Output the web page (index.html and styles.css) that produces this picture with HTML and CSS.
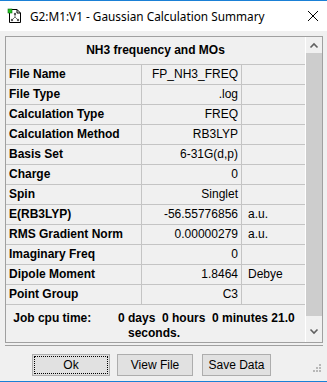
FILE: index.html
```html
<!DOCTYPE html>
<html lang="en">

<head>
    <meta charset="UTF-8" />
    <title>G2:M1:V1 - Gaussian Calculation Summary</title>
    <link rel="stylesheet" href="styles.css">
</head>

<body>
    <div class="window">
        <div class="titlebar">
            <svg class="app-icon" width="16" height="16" viewBox="0 0 16 16">
                <path d="M2.5 1.5 H10 L13.5 5 V14.5 H2.5 Z" fill="#fff" stroke="#000" />
                <path d="M10 1.5 V5 H13.5" fill="none" stroke="#000" />
                <path d="M8 6 V9 L5 12 M8 9 L11 12" fill="none" stroke="#777" />
                <circle cx="8" cy="6" r="1.2" fill="#555" />
                <circle cx="5" cy="12" r="1.2" fill="#555" />
                <circle cx="11" cy="12" r="1.2" fill="#555" />
                <rect x="1" y="1" width="4" height="4" fill="#22c322" stroke="#0a6a0a" stroke-width="0.6" />
            </svg>
            <span class="title">G2:M1:V1 - Gaussian Calculation Summary</span>
            <svg class="close" width="12" height="12" viewBox="0 0 12 12">
                <path d="M1 1 L11 11 M11 1 L1 11" stroke="#000" stroke-width="1" />
            </svg>
        </div>

        <div class="content">
            <div class="panel">
                <div class="grid">
                    <div class="header">NH3 frequency and MOs</div>

                    <div class="row"><div class="label">File Name</div><div class="value">FP_NH3_FREQ</div><div class="unit"></div></div>
                    <div class="row"><div class="label">File Type</div><div class="value">.log</div><div class="unit"></div></div>
                    <div class="row"><div class="label">Calculation Type</div><div class="value">FREQ</div><div class="unit"></div></div>
                    <div class="row"><div class="label">Calculation Method</div><div class="value">RB3LYP</div><div class="unit"></div></div>
                    <div class="row"><div class="label">Basis Set</div><div class="value">6-31G(d,p)</div><div class="unit"></div></div>
                    <div class="row"><div class="label">Charge</div><div class="value">0</div><div class="unit"></div></div>
                    <div class="row"><div class="label">Spin</div><div class="value">Singlet</div><div class="unit"></div></div>
                    <div class="row"><div class="label">E(RB3LYP)</div><div class="value">-56.55776856</div><div class="unit">a.u.</div></div>
                    <div class="row"><div class="label">RMS Gradient Norm</div><div class="value">0.00000279</div><div class="unit">a.u.</div></div>
                    <div class="row"><div class="label">Imaginary Freq</div><div class="value">0</div><div class="unit"></div></div>
                    <div class="row"><div class="label">Dipole Moment</div><div class="value">1.8464</div><div class="unit">Debye</div></div>
                    <div class="row"><div class="label">Point Group</div><div class="value">C3</div><div class="unit"></div></div>

                    <div class="cpu">Job cpu time:        0 days  0 hours  0 minutes 21.0<br>seconds.</div>
                </div>

                <div class="scrollbar">
                    <svg class="arrow" width="16" height="16" viewBox="0 0 16 16">
                        <path d="M4.5 10.5 L8 7 L11.5 10.5" fill="none" stroke="#606060" stroke-width="1.6" />
                    </svg>
                    <div class="thumb"></div>
                    <svg class="arrow" width="16" height="16" viewBox="0 0 16 16">
                        <path d="M4.5 3.5 L8 7 L11.5 3.5" fill="none" stroke="#606060" stroke-width="1.6" />
                    </svg>
                </div>
            </div>

            <div class="separator"></div>

            <div class="buttons">
                <button type="button" class="btn btn-ok"><span class="focus">Ok</span></button>
                <button type="button" class="btn btn-view">View File</button>
                <button type="button" class="btn btn-save">Save Data</button>
            </div>

            <svg class="grip" width="8" height="8" viewBox="0 0 8 8">
                <rect x="6" y="0" width="2" height="2" fill="#b8b8b8" />
                <rect x="3" y="3" width="2" height="2" fill="#b8b8b8" />
                <rect x="6" y="3" width="2" height="2" fill="#b8b8b8" />
                <rect x="0" y="6" width="2" height="2" fill="#b8b8b8" />
                <rect x="3" y="6" width="2" height="2" fill="#b8b8b8" />
                <rect x="6" y="6" width="2" height="2" fill="#b8b8b8" />
            </svg>
        </div>
    </div>
</body>

</html>
```

FILE: styles.css
```css
html,
body {
    margin: 0;
    padding: 0;
}

body {
    width: 327px;
    height: 382px;
    overflow: hidden;
    background: #f0f0f0;
}

.window {
    width: 327px;
    height: 382px;
    box-sizing: border-box;
    border-top: 1px solid #1a80d6;
    border-bottom: 1px solid #1a80d6;
    display: flex;
    flex-direction: column;
}

.titlebar {
    height: 30px;
    background: #fff;
    display: flex;
    align-items: center;
    position: relative;
}

.app-icon {
    margin-left: 7px;
    margin-top: -1px;
}

.title {
    margin-left: 7px;
    font-family: "Noto Sans", sans-serif;
    font-size: 11.8px;
    color: #000;
}

.close {
    position: absolute;
    right: 8px;
    top: 9px;
}

.content {
    flex: 1;
    background: #f0f0f0;
    padding: 5px 4px 0 5px;
    position: relative;
}

.panel {
    height: 307px;
    box-sizing: border-box;
    border: 1px solid #a0a0a0;
    display: flex;
}

.grid {
    width: 300px;
    font-family: "Liberation Sans", Arial, sans-serif;
    font-size: 12px;
    color: #000;
}

.header {
    height: 27px;
    line-height: 27px;
    text-align: center;
    font-weight: bold;
    border-bottom: 1px solid #c4c4c4;
}

.row {
    display: grid;
    grid-template-columns: 136px 100px 1fr;
    height: 20px;
    box-sizing: border-box;
    border-bottom: 1px solid #c4c4c4;
    line-height: 19px;
}

.label {
    font-weight: bold;
    padding-left: 3px;
    border-right: 1px solid #c4c4c4;
    white-space: nowrap;
}

.value {
    font-family: "Liberation Sans Narrow", "Liberation Sans", sans-serif;
    text-align: right;
    padding-right: 3px;
    border-right: 1px solid #c4c4c4;
}

.unit {
    font-family: "Liberation Sans Narrow", "Liberation Sans", sans-serif;
    padding-left: 6px;
}

.cpu {
    font-weight: bold;
    text-align: center;
    white-space: pre;
    line-height: 15px;
    padding-top: 6px;
    padding-right: 3px;
}

.scrollbar {
    width: 16px;
    border-left: 1px solid #fff;
    display: flex;
    flex-direction: column;
    background: #f0f0f0;
}

.arrow {
    display: block;
    height: 16px;
}

.thumb {
    flex: 1;
    background: #cdcdcd;
    margin-bottom: 10px;
}

.separator {
    height: 1px;
    background: #a0a0a0;
    margin-top: 2px;
}

.buttons {
    display: flex;
    padding-left: 27px;
    margin-top: 8px;
}

.btn {
    height: 22px;
    padding: 0;
    background: #e1e1e1;
    border: 1px solid #adadad;
    font-family: "Liberation Sans Narrow", "Liberation Sans", sans-serif;
    font-size: 12px;
    color: #000;
}

.btn-ok {
    width: 78px;
    padding: 1px;
}

.btn-view {
    width: 76px;
    margin-left: 7px;
}

.btn-save {
    width: 69px;
    margin-left: 9px;
}

.focus {
    display: flex;
    align-items: center;
    justify-content: center;
    height: 100%;
    box-sizing: border-box;
    border: 1px dotted #000;
}

.grip {
    position: absolute;
    right: 6px;
    bottom: 9px;
}
```
